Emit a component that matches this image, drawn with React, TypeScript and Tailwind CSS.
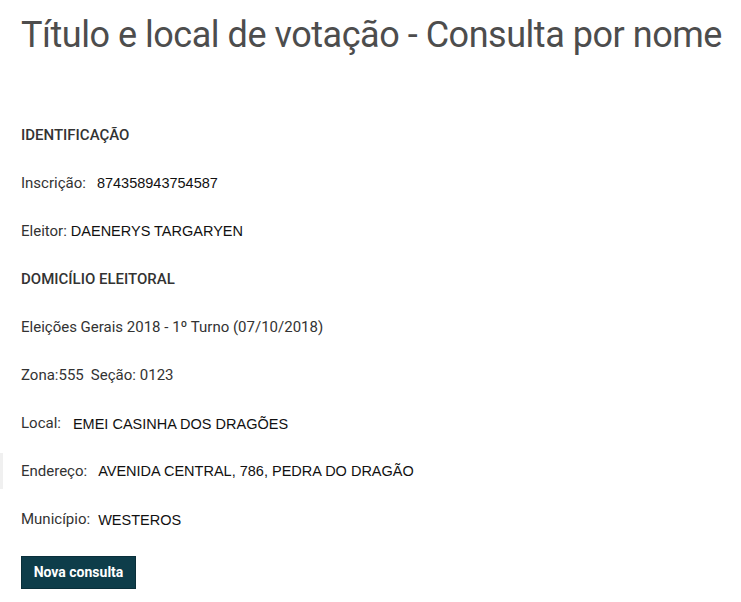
import React from 'react';

const roboto = { fontFamily: 'Roboto, "Noto Sans", sans-serif' };

function Row({ label, value, gap, className = '' }: { label: string; value: string; gap: string; className?: string }) {
  return (
    <div className={`flex items-baseline h-[20px] leading-[20px] ${className}`}>
      <span className="text-[15px] text-[#333]">{label}</span>
      <span className={`font-['Liberation_Sans',Arial,sans-serif] text-[14.5px] text-[#111] ${gap}`}>{value}</span>
    </div>
  );
}

export default function App() {
  return (
    <div className="min-h-screen bg-white pt-[14px] pb-[13px]" style={roboto}>
      <h1 className="px-[21px] text-[36px] leading-[43px] tracking-[-0.47px] text-[#4d4d4d] font-normal whitespace-nowrap">
        Título e local de votação - Consulta por nome
      </h1>

      <div className="mt-[68px] flex flex-col gap-[28px]">
        <div className="px-[21px] h-[20px] leading-[20px] text-[15px] font-medium text-[#333]">IDENTIFICAÇÃO</div>
        <Row className="px-[21px]" label="Inscrição:" value="874358943754587" gap="ml-[11px]" />
        <Row className="px-[21px]" label="Eleitor:" value="DAENERYS TARGARYEN" gap="ml-[4px]" />
        <div className="px-[21px] h-[20px] leading-[20px] text-[15px] font-medium text-[#333]">DOMICÍLIO ELEITORAL</div>
        <div className="px-[21px] h-[20px] leading-[20px] text-[15px] text-[#333]">Eleições Gerais 2018 - 1º Turno (07/10/2018)</div>
        <div className="px-[21px] h-[20px] leading-[20px] text-[15px] text-[#333] flex">
          <span>Zona:</span>
          <span>555</span>
          <span className="ml-[7px]">Seção:</span>
          <span className="ml-[4px]">0123</span>
        </div>
        <Row className="px-[21px]" label="Local:" value="EMEI CASINHA DOS DRAGÕES" gap="ml-[12px] relative top-[1px]" />
        <div className="relative">
          <div className="absolute left-0 top-[-8px] w-[3px] h-[36px] bg-[#f0f0f0]" />
          <Row className="px-[21px]" label="Endereço:" value="AVENIDA CENTRAL, 786, PEDRA DO DRAGÃO" gap="ml-[11px]" />
        </div>
        <Row className="px-[21px]" label="Município:" value="WESTEROS" gap="ml-[8px] relative top-[1px]" />
      </div>

      <div className="px-[21px] mt-[27px]">
        <button className="h-[33px] w-[115px] bg-[#0e3d4a] text-white text-[14px] font-bold border border-[#0a2f3a]">
          Nova consulta
        </button>
      </div>
    </div>
  );
}
